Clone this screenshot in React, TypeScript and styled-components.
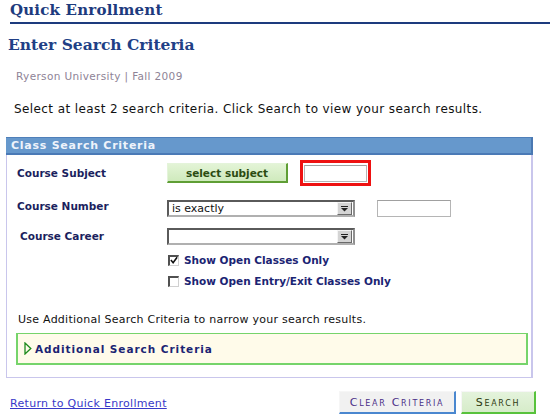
import React from "react";
import styled, { createGlobalStyle } from "styled-components";

const Global = createGlobalStyle`
  html, body { margin: 0; padding: 0; background: #ffffff; }
  body { font-family: "DejaVu Sans", Verdana, sans-serif; width: 550px; height: 420px; overflow: hidden; }
`;

const Page = styled.div`
  width: 550px;
  height: 420px;
  box-sizing: border-box;
  display: flex;
  flex-direction: column;
`;

const PageTitle = styled.h1`
  margin: 0 0 0 10px;
  padding: 1px 0 2px 0;
  font-family: "DejaVu Serif", Georgia, serif;
  font-weight: bold;
  font-size: 15px;
  line-height: 19px;
  color: #1d3b7e;
  border-bottom: 2px solid #1d3b7e;
  letter-spacing: 0.2px;
`;

const SubTitle = styled.h2`
  margin: 10px 0 0 8px;
  font-family: "DejaVu Serif", Georgia, serif;
  font-weight: bold;
  font-size: 15.5px;
  line-height: 22px;
  color: #213f86;
`;

const Institution = styled.div`
  margin: 14px 0 0 16px;
  font-size: 10.5px;
  line-height: 13px;
  letter-spacing: 0.35px;
  color: #8e8396;
`;

const Instructions = styled.p`
  margin: 19px 0 0 14px;
  font-size: 12px;
  line-height: 14px;
  letter-spacing: 0.4px;
  color: #111;
`;

const Panel = styled.section`
  margin: 21px 0 0 6px;
  width: 527px;
  box-sizing: border-box;
  border-left: 1px solid #c9c6ec;
  border-right: 2px solid #c9c6ec;
  border-bottom: 1px solid #c9c6ec;
`;

const PanelHeader = styled.div`
  height: 18px;
  box-sizing: border-box;
  background: #6698cc;
  border-top: 1px solid #4f7fb9;
  border-bottom: 2px solid #4a7ab6;
  border-right: 2px solid #4a78b2;
  margin: 0 -2px 0 -1px;
  padding-left: 5px;
  font-size: 11px;
  font-weight: bold;
  line-height: 16px;
  letter-spacing: 0.75px;
  color: #eef3fb;
`;

const PanelBody = styled.div`
  padding: 5px 4px 12px 10px;
  display: flex;
  flex-direction: column;
`;

const Row = styled.div<{ $h: number; $gap: number }>`
  display: flex;
  align-items: center;
  height: ${(p) => p.$h}px;
  margin-top: ${(p) => p.$gap}px;
`;

const Label = styled.div<{ $indent?: number; $dy?: number }>`
  width: 150px;
  flex: none;
  box-sizing: border-box;
  padding-left: ${(p) => p.$indent ?? 0}px;
  font-size: 10.5px;
  font-weight: bold;
  color: #1b1f5e;
  position: relative;
  top: ${(p) => p.$dy ?? 0}px;
`;

const GreenButton = styled.button<{ $w: number; $h: number }>`
  width: ${(p) => p.$w}px;
  height: ${(p) => p.$h}px;
  box-sizing: border-box;
  padding: 0;
  border: none;
  border-right: 2px solid #5f9e35;
  border-bottom: 2px solid #5f9e35;
  border-top: 1px solid #e4f4da;
  border-left: 1px solid #e4f4da;
  background: linear-gradient(#e3f4d6, #cfeabd);
  font-family: "DejaVu Sans", Verdana, sans-serif;
  font-size: 10.5px;
  font-weight: bold;
  color: #2c4c12;
  cursor: pointer;
`;

const HighlightBox = styled.div`
  margin-left: 12px;
  width: 71px;
  height: 26px;
  box-sizing: border-box;
  border: 3px solid #ee1111;
  display: flex;
  align-items: center;
  justify-content: center;
`;

const TextInput = styled.input<{ $w: number; $h: number; $ml?: number }>`
  width: ${(p) => p.$w}px;
  height: ${(p) => p.$h}px;
  margin-left: ${(p) => p.$ml ?? 0}px;
  box-sizing: border-box;
  border: 1px solid #b5b5b5;
  border-top-color: #a0a0a0;
  background: #fff;
  padding: 0;
  outline: none;
`;

const SelectBox = styled.div`
  width: 188px;
  height: 17px;
  box-sizing: border-box;
  border: 2px solid #5a5a5a;
  border-right-color: #909090;
  border-bottom-color: #b0b0b0;
  background: #fff;
  display: flex;
  align-items: center;
  justify-content: space-between;
  font-size: 11px;
  color: #111;
  padding-left: 3px;
`;

const SelectText = styled.span`
  line-height: 13px;
`;

const ArrowButton = styled.span`
  width: 15px;
  height: 13px;
  margin-right: 1px;
  box-sizing: border-box;
  background: #d4d4d4;
  border: 1px solid #f4f4f4;
  border-right-color: #6a6a6a;
  border-bottom-color: #6a6a6a;
  display: flex;
  align-items: center;
  justify-content: center;
`;

const CheckRow = styled(Row)`
  padding-left: 150px;
`;

const CheckBox = styled.span`
  width: 11px;
  height: 11px;
  margin-left: 1px;
  box-sizing: border-box;
  border: 1px solid #d0d0d0;
  border-top: 2px solid #505050;
  border-left: 2px solid #505050;
  background: #fff;
  display: flex;
  align-items: center;
  justify-content: center;
  flex: none;
`;

const CheckLabel = styled.span`
  margin-left: 5px;
  font-size: 10.5px;
  font-weight: bold;
  color: #1b2473;
`;

const Note = styled.p`
  margin: 24px 0 0 1px;
  font-size: 11px;
  line-height: 13px;
  letter-spacing: 0.25px;
  color: #111;
`;

const Disclosure = styled.div`
  margin: 7px 0 0 -1px;
  width: 512px;
  height: 32px;
  box-sizing: border-box;
  border: 2px solid #76d46b;
  border-top-width: 1px;
  background: #fffbea;
  display: flex;
  align-items: center;
  padding-left: 6px;
`;

const DisclosureText = styled.span`
  margin-left: 3px;
  font-size: 10.5px;
  font-weight: bold;
  letter-spacing: 0.95px;
  color: #1b2473;
`;

const Footer = styled.div`
  margin: 13px 0 0 10px;
  width: 526px;
  display: flex;
  align-items: center;
  justify-content: space-between;
`;

const BackLink = styled.a`
  font-size: 11px;
  letter-spacing: 0.3px;
  color: #3838c8;
  text-decoration: underline;
  position: relative;
  top: 1px;
`;

const Buttons = styled.div`
  display: flex;
  gap: 5px;
`;

const FooterButton = styled.button<{ $tone: "gray" | "green"; $w: number }>`
  width: ${(p) => p.$w}px;
  height: 23px;
  box-sizing: border-box;
  padding: 0;
  border: none;
  border-top: 1px solid #f6f6f6;
  border-left: 1px solid #f6f6f6;
  border-right: 2px solid ${(p) => (p.$tone === "gray" ? "#4a87cf" : "#58c23c")};
  border-bottom: 2px solid ${(p) => (p.$tone === "gray" ? "#4a87cf" : "#58c23c")};
  background: ${(p) => (p.$tone === "gray" ? "#f1f1f1" : "linear-gradient(#e4f3dc, #d6ecc9)")};
  font-family: "DejaVu Sans", Verdana, sans-serif;
  font-size: 11px;
  font-variant: small-caps;
  letter-spacing: 1.7px;
  color: ${(p) => (p.$tone === "gray" ? "#4a2f88" : "#2e3a10")};
  cursor: pointer;
`;

const Arrow = () => (
  <svg width="9" height="7" viewBox="0 0 9 7">
    <rect x="1" y="1" width="7" height="1" fill="#222" />
    <path d="M1 3 H8 L4.5 6.5 Z" fill="#222" />
  </svg>
);

const Check = () => (
  <svg width="9" height="9" viewBox="0 0 9 9">
    <path d="M1 4 L3.5 7 L8 0.8" stroke="#111" strokeWidth="1.8" fill="none" />
  </svg>
);

const Triangle = () => (
  <svg width="8" height="13" viewBox="0 0 8 13">
    <path d="M1 1 L6.8 6.5 L1 12 Z" fill="#fffbea" stroke="#1c8a1c" strokeWidth="1.3" />
  </svg>
);

export default function App() {
  return (
    <>
      <Global />
      <Page>
        <PageTitle>Quick Enrollment</PageTitle>
        <SubTitle>Enter Search Criteria</SubTitle>
        <Institution>Ryerson University | Fall 2009</Institution>
        <Instructions>
          Select at least 2 search criteria. Click Search to view your search results.
        </Instructions>
        <Panel>
          <PanelHeader>Class Search Criteria</PanelHeader>
          <PanelBody>
            <Row $h={26} $gap={0}>
              <Label>Course Subject</Label>
              <GreenButton $w={121} $h={20}>select subject</GreenButton>
              <HighlightBox>
                <TextInput $w={63} $h={17} />
              </HighlightBox>
            </Row>
            <Row $h={18} $gap={13}>
              <Label $dy={-2}>Course Number</Label>
              <SelectBox>
                <SelectText>is exactly</SelectText>
                <ArrowButton>
                  <Arrow />
                </ArrowButton>
              </SelectBox>
              <TextInput $w={74} $h={17} $ml={22} />
            </Row>
            <Row $h={17} $gap={11}>
              <Label $indent={3} $dy={-1}>Course Career</Label>
              <SelectBox>
                <SelectText />
                <ArrowButton>
                  <Arrow />
                </ArrowButton>
              </SelectBox>
            </Row>
            <CheckRow $h={16} $gap={7}>
              <CheckBox>
                <Check />
              </CheckBox>
              <CheckLabel>Show Open Classes Only</CheckLabel>
            </CheckRow>
            <CheckRow $h={16} $gap={5}>
              <CheckBox />
              <CheckLabel>Show Open Entry/Exit Classes Only</CheckLabel>
            </CheckRow>
            <Note>Use Additional Search Criteria to narrow your search results.</Note>
            <Disclosure>
              <Triangle />
              <DisclosureText>Additional Search Criteria</DisclosureText>
            </Disclosure>
          </PanelBody>
        </Panel>
        <Footer>
          <BackLink href="#">Return to Quick Enrollment</BackLink>
          <Buttons>
            <FooterButton $tone="gray" $w={117}>Clear Criteria</FooterButton>
            <FooterButton $tone="green" $w={75}>Search</FooterButton>
          </Buttons>
        </Footer>
      </Page>
    </>
  );
}
